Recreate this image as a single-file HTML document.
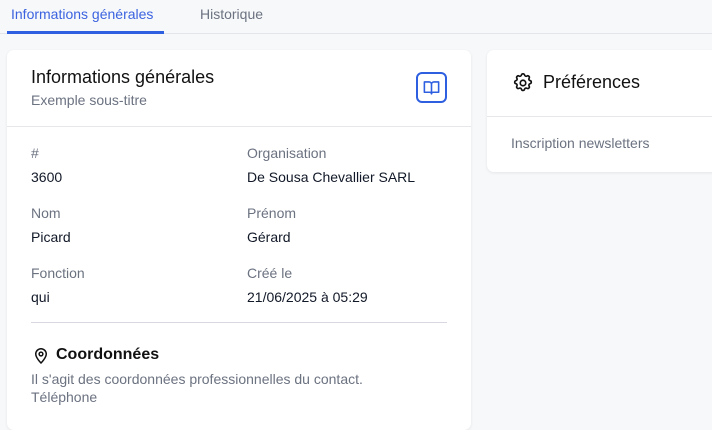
<!DOCTYPE html>
<html><head><meta charset="utf-8"><style>
*{box-sizing:border-box;margin:0;padding:0}
body{width:712px;height:408px;overflow:hidden;background:#f7f8fa;font-family:"Liberation Sans",sans-serif;color:#111827;position:relative;font-size:14px}
.abs{position:absolute;white-space:nowrap}
.tabs{position:absolute;left:0;top:0;width:712px;height:34px;border-bottom:1px solid #e3e5ea}
.card{position:absolute;background:#fff;border-radius:7px;box-shadow:0 1px 3px rgba(0,0,0,.08)}
.lab{color:#6b7280;font-size:14px}
.val{color:#111827;font-size:14px}
</style></head><body>
<div class="tabs"></div>
<div class="abs" style="left:11px;top:6px;color:#3b63e0;font-size:14px">Informations générales</div>
<div class="abs" style="left:7px;top:31px;width:157px;height:3px;background:#2d5fe0"></div>
<div class="abs" style="left:200px;top:6px;color:#6b7280;font-size:14px">Historique</div>

<div class="card" style="left:7px;top:50px;width:464px;height:380px"></div>
<div class="abs" style="left:31px;top:67px;font-size:18px;color:#111">Informations générales</div>
<div class="abs" style="left:31px;top:92px;font-size:14px;color:#6b7280">Exemple sous-titre</div>
<div class="abs" style="left:416px;top:72px;width:31px;height:31px;border:2px solid #2d5fe0;border-radius:6px"></div>
<svg class="abs" style="left:422px;top:78px" width="19" height="19" viewBox="0 0 24 24" fill="none" stroke="#2d5fe0" stroke-width="2" stroke-linejoin="round"><path d="M3 5h6a3 3 0 0 1 3 3v12a2 2 0 0 0-2-2H3zM21 5h-6a3 3 0 0 0-3 3v12a2 2 0 0 1 2-2h7z"/></svg>
<div class="abs" style="left:7px;top:126px;width:464px;height:1px;background:#e5e7eb"></div>

<div class="abs lab" style="left:31px;top:145px">#</div>
<div class="abs val" style="left:31px;top:169px">3600</div>
<div class="abs lab" style="left:247px;top:145px">Organisation</div>
<div class="abs val" style="left:247px;top:169px">De Sousa Chevallier SARL</div>
<div class="abs lab" style="left:31px;top:205px">Nom</div>
<div class="abs val" style="left:31px;top:229px">Picard</div>
<div class="abs lab" style="left:247px;top:205px">Prénom</div>
<div class="abs val" style="left:247px;top:229px">Gérard</div>
<div class="abs lab" style="left:31px;top:265px">Fonction</div>
<div class="abs val" style="left:31px;top:289px">qui</div>
<div class="abs lab" style="left:247px;top:265px">Créé le</div>
<div class="abs val" style="left:247px;top:289px">21/06/2025 à 05:29</div>
<div class="abs" style="left:31px;top:322px;width:416px;height:1px;background:#d8d8e0"></div>

<svg class="abs" style="left:32px;top:346px" width="18" height="19" viewBox="0 0 24 24" fill="none" stroke="#111" stroke-width="2"><path d="M12 22s-7-7-7-12a7 7 0 0 1 14 0c0 5-7 12-7 12z"/><circle cx="12" cy="10" r="2.5"/></svg>
<div class="abs" style="left:56px;top:346px;font-size:16px;font-weight:bold;color:#111">Coordonnées</div>
<div class="abs" style="left:31px;top:371px;color:#6b7280">Il s'agit des coordonnées professionnelles du contact.</div>
<div class="abs" style="left:31px;top:389px;color:#6b7280">Téléphone</div>

<div class="card" style="left:487px;top:50px;width:240px;height:122px"></div>
<svg class="abs" style="left:512px;top:72px" width="22" height="22" viewBox="0 0 24 24" fill="none" stroke="#111" stroke-width="1.8" stroke-linejoin="round"><path d="M10.3 3.3c.4-1.7 2.9-1.7 3.4 0a1.7 1.7 0 0 0 2.6 1.1c1.5-.9 3.3.8 2.4 2.4a1.7 1.7 0 0 0 1 2.6c1.8.4 1.8 2.9 0 3.4a1.7 1.7 0 0 0-1 2.6c.9 1.5-.8 3.3-2.4 2.4a1.7 1.7 0 0 0-2.6 1c-.4 1.8-2.9 1.8-3.4 0a1.7 1.7 0 0 0-2.6-1c-1.5.9-3.3-.8-2.4-2.4a1.7 1.7 0 0 0-1-2.6c-1.8-.4-1.8-2.9 0-3.4a1.7 1.7 0 0 0 1-2.6c-.9-1.5.8-3.3 2.4-2.4a1.7 1.7 0 0 0 2.6-1.1z"/><circle cx="12" cy="12" r="3"/></svg>
<div class="abs" style="left:543px;top:72px;font-size:18px;color:#111">Préférences</div>
<div class="abs" style="left:487px;top:116px;width:225px;height:1px;background:#e5e7eb"></div>
<div class="abs" style="left:511px;top:135px;color:#6b7280">Inscription newsletters</div>
</body></html>
